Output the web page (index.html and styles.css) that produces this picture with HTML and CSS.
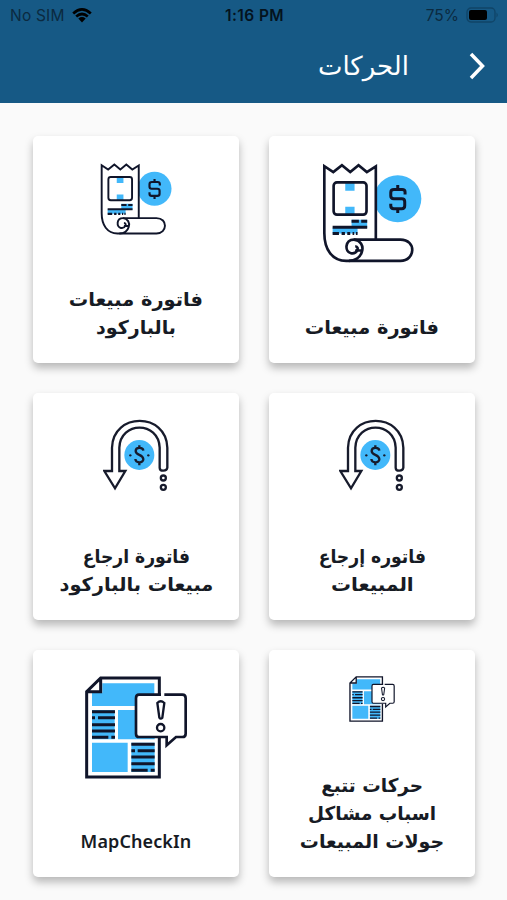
FILE: index.html
```html
<!DOCTYPE html>
<html lang="ar" dir="rtl">
<head>
<meta charset="utf-8">
<title>الحركات</title>
<link rel="stylesheet" href="styles.css">
</head>
<body>
<svg class="defs" aria-hidden="true">
  <symbol id="invoice" viewBox="64 40 301 300">
    <circle cx="292" cy="147" r="71" fill="#42b8fa"/>
    <path d="M71 49L98 67L124 46L149 67L174 46L199 67L226 49V270H300Q334 273 335 301Q334 331 300 334H135C94 328 71 299 71 250Z" fill="#fff"/>
    <path d="M134 100h28v23h-28zM134 171h28v23h-28zM153 210h47v25h-47zM96 234h75v18h-75z" fill="#42b8fa"/>
    <g fill="none" stroke="#10152a" stroke-width="8">
      <path d="M226 270V50L199 67L174 46L149 67L124 46L98 67L71 49V250C71 299 94 334 137 334H300C346 334 349 270 300 270H160C132 270 132 307 151 311C169 315 179 291 164 290"/>
      <path d="M160 270C180 272 190 289 184 307C179 325 162 334 145 334M164 303H186"/>
      <rect x="99" y="98" width="99" height="97" rx="10"/>
      <path d="M153 215h22m7 0h18M96 233h104M96 252h19m8 0h10m7 0h9m7 0h5m5 0h5" stroke-width="9"/>
      <path d="M314 134V127Q314 119 305 119H281Q271 119 271 128V139Q271 147 280 147H304Q313 147 313 156V168Q313 177 304 177H280Q271 177 271 168V162M292 106V119M292 177V190" stroke-width="9"/>
    </g>
  </symbol>
  <symbol id="return" viewBox="40 30 198 216">
    <circle cx="149" cy="138" r="45" fill="#42b8fa"/>
    <g fill="none" stroke="#171b2c" stroke-width="7">
      <path d="M67 186V116C70 9 230 9 233 116V176Q232 185 221 185Q210 185 210 176V116C207 36 92 36 89 116V186H107L76 238L44 186Z"/>
      <circle cx="221" cy="207" r="7.500"/>
      <circle cx="221" cy="235" r="7.500"/>
      <path d="M161 125C160 114 138 114 138 126C138 140 161 135 161 151C161 163 138 163 137 150M149 109V118M149 160V169"/>
    </g>
    <circle cx="122" cy="139" r="3.500" fill="#171b2c"/><circle cx="176" cy="139" r="3.500" fill="#171b2c"/>
  </symbol>
  <symbol id="report" viewBox="45 32 306 309">
    <path d="M92 38H268V335H50V79Z" fill="#fff"/>
    <path d="M97 54H253V122H66V82H97ZM144 134H254V222H144ZM66 232H173V320H66ZM66 134h68v88H66zM184 232h70v88h-70z" fill="#42b8fa"/>
    <path d="M66 139h69M66 157h9m9 0h51M66 178h69M66 197h69M66 216h49m9 0h11M184 237h70M184 256h11m8 0h51M184 275h70M184 295h70M184 315h49m9 0h12" stroke="#10152a" stroke-width="9"/>
    <path d="M268 90V38H92L50 79V335H268V218M92 38V79H50" fill="none" stroke="#10152a" stroke-width="9"/>
    <path d="M207 88H337Q347 88 347 99V205Q347 215 337 215H318L290 240V215H207Q198 215 198 205V99Q198 88 207 88Z" fill="#fff"/>
    <path d="M283 88H337Q347 88 347 99V205Q347 215 337 215H318L290 240V215H207Q198 215 198 205V99Q198 88 207 88H273" fill="none" stroke="#10152a" stroke-width="8"/>
    <path d="M262 113Q272 103 283 113L277 157Q272 163 268 157Z" fill="none" stroke="#10152a" stroke-width="7"/>
    <circle cx="272" cy="187" r="11" fill="none" stroke="#10152a" stroke-width="7"/>
  </symbol>
</svg>

<header class="top">
  <div class="status" dir="ltr">
    <div class="carrier"><span>No SIM</span>
      <svg class="wifi" viewBox="0 0 20 15"><path d="M1.200 5.500Q10-2.600 18.800 5.500M4.200 8.600Q10 3.400 15.800 8.600" fill="none" stroke="#000" stroke-width="2.700"/><path d="M6.300 10.500Q10 7.600 13.700 10.500L10 14.500Z"/></svg>
    </div>
    <div class="clock">1:16 PM</div>
    <div class="power"><span>75%</span>
      <svg class="battery" viewBox="0 0 33 16"><rect x="1" y="1" width="28" height="14" rx="4" fill="none" stroke="#104467" stroke-width="1.300"/><rect x="3" y="3" width="18" height="10" rx="2"/><path d="M30.500 5.500Q33 8 30.500 10.500Z" fill="#104467"/></svg>
    </div>
  </div>
  <div class="bar">
    <svg class="back" viewBox="0 0 16 28"><path d="M2 2L13.500 14L2 26" fill="none" stroke="#fff" stroke-width="3.500"/></svg>
    <h1>الحركات</h1>
  </div>
</header>

<main class="grid">
  <section class="card"><svg class="icon invoice"><use href="#invoice"/></svg><p><span class="w102">فاتورة مبيعات</span></p></section>
  <section class="card"><svg class="icon invoice-s"><use href="#invoice"/></svg><p><span class="w102">فاتورة مبيعات</span><span>بالباركود</span></p></section>
  <section class="card"><svg class="icon return"><use href="#return"/></svg><p><span class="w90">فاتوره إرجاع</span><span class="w105">المبيعات</span></p></section>
  <section class="card"><svg class="icon return"><use href="#return"/></svg><p><span class="w90">فاتورة ارجاع</span><span class="w102">مبيعات بالباركود</span></p></section>
  <section class="card"><svg class="icon report-s"><use href="#report"/></svg><p><span class="w97">حركات تتبع</span><span class="w97">اسباب مشاكل</span><span>جولات المبيعات</span></p></section>
  <section class="card"><svg class="icon report"><use href="#report"/></svg><p><span class="latin">MapCheckIn</span></p></section>
</main>
</body>
</html>
```
FILE: styles.css
```css
* { box-sizing: border-box; margin: 0; padding: 0; }
body { width: 507px; height: 900px; overflow: hidden; background: #fafafa; color: #171b24; font-family: "DejaVu Sans", sans-serif; }
.defs { display: none; }
.top { height: 103px; background: #165985; }
.status { height: 30px; padding: 0 8px 0 10px; display: grid; grid-template-columns: 1fr auto 1fr; align-items: center; font-family: Inter, sans-serif; font-size: 15.500px; color: #0b2a40; }
.carrier, .power { display: flex; align-items: center; gap: 7px; }
.carrier { letter-spacing: .2px; }
.power { justify-content: flex-end; }
.wifi { width: 20px; height: 15px; }
.battery { width: 33px; height: 16px; }
.clock { color: #04131e; font-weight: 600; letter-spacing: .4px; }
.bar { height: 73px; padding: 0 22px 2px 0; display: flex; align-items: center; }
.back { width: 16px; height: 28px; }
h1 { margin-right: 60px; color: #fff; font-size: 26px; font-weight: 400; line-height: 40px; white-space: nowrap; }
.grid { padding: 33px 32px 0 33px; display: grid; grid-template-columns: 206px 206px; grid-auto-rows: 227px; gap: 30px; }
.card { padding: 27px 0 22px; display: flex; flex-direction: column; align-items: center; justify-content: space-between; background: #fff; border-radius: 5px; box-shadow: 0 5px 8px rgba(0,0,0,.27); }
.icon { display: block; }
.invoice { width: 100px; height: 100px; }
.invoice-s { width: 72px; height: 72px; }
.return { width: 66px; height: 72px; }
.report { width: 102px; height: 103px; }
.report-s { width: 46px; height: 46px; }
.return, .report, .report-s { margin-top: -1px; }
.card p { font-size: 19px; font-weight: 700; text-align: center; }
.card span { display: block; height: 28px; line-height: 28px; white-space: nowrap; }
.w90 { transform: scaleX(.905); }
.w97 { transform: scaleX(.97); }
.w102 { transform: scaleX(1.02); }
.w105 { transform: scaleX(1.05); }
.card .latin { font-family: "Noto Sans", sans-serif; font-size: 18px; font-weight: 600; letter-spacing: .1px; }
```
